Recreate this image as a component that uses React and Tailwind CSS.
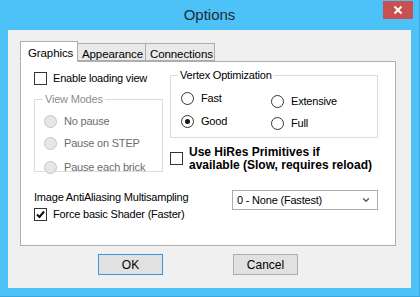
import { ChevronDown } from 'lucide-react';

const font = { fontFamily: '"Liberation Sans", Arial, sans-serif' };

function Check({ checked }) {
  return (
    <span className="w-[13px] h-[13px] border border-[#333] bg-white flex items-center justify-center shrink-0">
      {checked && (
        <svg width="9" height="9" viewBox="0 0 9 9">
          <path d="M1 4.5 L3.5 7 L8 1.5" stroke="#111" strokeWidth="2" fill="none" />
        </svg>
      )}
    </span>
  );
}

function Radio({ checked, disabled }) {
  return (
    <span
      className={`w-[13px] h-[13px] rounded-full border flex items-center justify-center shrink-0 ${
        disabled ? 'border-[#c6c6c6] bg-[#e6e6e6]' : 'border-[#333] bg-white'
      }`}
    >
      {checked && <span className="w-[5px] h-[5px] rounded-full bg-[#111]" />}
    </span>
  );
}

function RadioRow({ label, checked, disabled, className = '' }) {
  return (
    <div className={`flex items-center gap-[7px] h-[13px] ${className}`}>
      <Radio checked={checked} disabled={disabled} />
      <span className={`leading-[13px] ${disabled ? 'text-[#6d6d6d]' : 'text-black'}`}>{label}</span>
    </div>
  );
}

export default function App() {
  return (
    <div className="w-[420px] h-[297px] bg-[#4cc2f8] border-r border-b border-[#3ba7e0] flex flex-col text-black" style={font}>
      {/* title bar */}
      <div className="h-[30px] flex items-center relative">
        <div className="flex-1 text-center text-[15px] text-[#1f2a33] pt-[1px]">Options</div>
        <button className="absolute right-[6px] top-[1px] w-[30px] h-[18px] bg-[#c75050] text-white flex items-center justify-center">
          <svg width="10" height="10" viewBox="0 0 10 10">
            <path d="M1.5 1.5 L8.5 8.5 M8.5 1.5 L1.5 8.5" stroke="white" strokeWidth="2" />
          </svg>
        </button>
      </div>

      {/* client */}
      <div className="mx-[8px] h-[258px] bg-[#f0f0f0] px-[12px] pt-[12px]">
        {/* tabs */}
        <div className="flex items-end h-[20px] relative z-10 text-[11.5px] tracking-[-0.1px]">
          <div className="w-[58px] h-[21px] bg-white border border-[#adadad] border-b-white pl-[7px] pt-[3px]">Graphics</div>
          <div className="w-[68px] h-[18px] bg-[#e9e9e9] border border-[#adadad] border-l-0 pl-[4px] pt-[2px] mb-[1px]">Appearance</div>
          <div className="w-[69px] h-[18px] bg-[#e9e9e9] border border-[#adadad] border-l-0 pl-[4px] pt-[2px] mb-[1px]">Connections</div>
        </div>

        {/* panel */}
        <div className="w-[376px] h-[185px] bg-white border border-[#adadad] -mt-[1px] flex flex-col text-[11px] tracking-[-0.2px]">
          <div className="h-[128px] flex">
            {/* left column */}
            <div className="w-[149px] pl-[13px] pt-[10px]">
              <div className="flex items-center gap-[6px] h-[13px]">
                <Check />
                <span>Enable loading view</span>
              </div>
              <fieldset className="mt-[8px] w-[129px] h-[79px] border border-[#dcdcdc] pl-[9px] pt-[10px]">
                <legend className="leading-[12px] text-[#8d8d8d] px-[2px] -ml-[1px]">View Modes</legend>
                <RadioRow label="No pause" disabled />
                <RadioRow label="Pause on STEP" disabled className="mt-[9px]" />
                <RadioRow label="Pause each brick" disabled className="mt-[11px]" />
              </fieldset>
            </div>

            {/* right column */}
            <div className="flex-1 pt-[7px]">
              <fieldset className="w-[208px] h-[69px] border border-[#dcdcdc] pl-[10px] pt-[11px] flex">
                <legend className="leading-[12px] px-[2px] -ml-[3px]">Vertex Optimization</legend>
                <div className="w-[90px]">
                  <RadioRow label="Fast" />
                  <RadioRow label="Good" checked className="mt-[10px]" />
                </div>
                <div className="pt-[3px]">
                  <RadioRow label="Extensive" />
                  <RadioRow label="Full" className="mt-[9px]" />
                </div>
              </fieldset>
              <div className="flex items-center gap-[6px] mt-[14px] h-[13px]">
                <Check />
                <div className="text-[12px] font-bold tracking-normal">
                  <div className="leading-[13px]">Use HiRes Primitives if</div>
                  <div className="leading-[13px]">available (Slow, requires reload)</div>
                </div>
              </div>
            </div>
          </div>

          {/* bottom row */}
          <div className="flex">
            <div className="w-[211px] pl-[13px]">
              <div className="leading-[12px] h-[12px] mt-[1px]">Image AntiAliasing Multisampling</div>
              <div className="flex items-center gap-[6px] h-[13px] mt-[5px]">
                <Check checked />
                <span>Force basic Shader (Faster)</span>
              </div>
            </div>
            <div className="w-[146px] h-[20px] border border-[#abadb3] bg-white flex items-center pl-[4px] pr-[6px]">
              <span className="flex-1">0 - None (Fastest)</span>
              <ChevronDown size={10} strokeWidth={3} className="text-[#555]" />
            </div>
          </div>
        </div>

        {/* buttons */}
        <div className="flex mt-[8px] text-[12px]">
          <button className="ml-[78px] w-[65px] h-[21px] bg-[#e1e1e1] border border-[#3c95e0]">OK</button>
          <button className="ml-[70px] w-[65px] h-[21px] bg-[#e1e1e1] border border-[#adadad]">Cancel</button>
        </div>
      </div>
    </div>
  );
}
